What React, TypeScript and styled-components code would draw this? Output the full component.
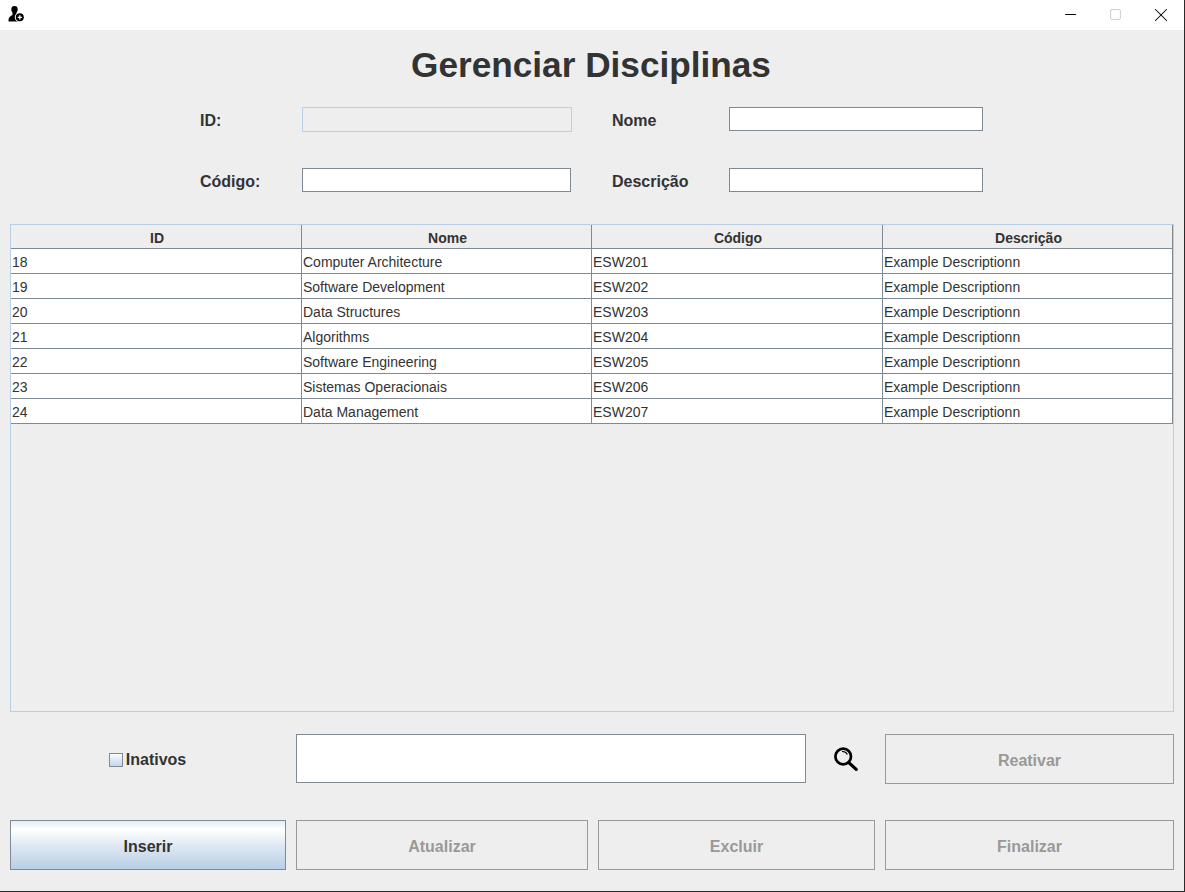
import styled, {createGlobalStyle} from "styled-components"
import {Minus, Square, X} from "lucide-react"

interface DisciplinaRow {
  id: number;
  nome: string;
  codigo: string;
  descricao: string;
}

const disciplinas: DisciplinaRow[] = [
  {id: 18, nome: "Computer Architecture", codigo: "ESW201", descricao: "Example Descriptionn"},
  {id: 19, nome: "Software Development", codigo: "ESW202", descricao: "Example Descriptionn"},
  {id: 20, nome: "Data Structures", codigo: "ESW203", descricao: "Example Descriptionn"},
  {id: 21, nome: "Algorithms", codigo: "ESW204", descricao: "Example Descriptionn"},
  {id: 22, nome: "Software Engineering", codigo: "ESW205", descricao: "Example Descriptionn"},
  {id: 23, nome: "Sistemas Operacionais", codigo: "ESW206", descricao: "Example Descriptionn"},
  {id: 24, nome: "Data Management", codigo: "ESW207", descricao: "Example Descriptionn"},
]

const AppIcon = () => (
  <svg width="17" height="17" viewBox="0 0 17 17">
    <ellipse cx="6.5" cy="3.4" rx="3.2" ry="3.4" fill="#000" />
    <path d="M4.5 5.5h4v3l3 1.2v5.8H0.5c0-3.2 .8-5 4-6.4z" fill="#000" />
    <circle cx="11.8" cy="11.3" r="5" fill="#fff" />
    <circle cx="11.8" cy="11.3" r="4" fill="#000" />
    <path d="M11.8 9.2v4.2M9.7 11.3h4.2" stroke="#fff" strokeWidth="1.3" />
  </svg>
)

const SearchIcon = () => (
  <svg width="24" height="24" viewBox="0 0 24 24" fill="none">
    <circle cx="9.2" cy="9.5" r="7.8" stroke="#000" strokeWidth="2.7" />
    <path d="M8 4.6c2.4-.2 4.4 1 5.4 3" stroke="#000" strokeWidth="1.1" />
    <path d="M14.8 15.6l7.4 6.8" stroke="#000" strokeWidth="3.2" strokeLinecap="round" />
  </svg>
)

export default function App() {
  return (
    <>
      <GlobalStyle />
      <Window>
        <TitleBar>
          <AppIcon />
          <WindowControls>
            <WindowButton><Minus size={17} strokeWidth={1.4} color="#000" /></WindowButton>
            <WindowButton><Square size={13} strokeWidth={1.6} color="#c4c4c4" /></WindowButton>
            <WindowButton><X size={22} strokeWidth={1.1} color="#000" /></WindowButton>
          </WindowControls>
        </TitleBar>
        <Content>
          <Heading>Gerenciar Disciplinas</Heading>
          <Form>
            <FieldLabel>ID:</FieldLabel>
            <LockedInput disabled />
            <FieldLabel>Nome</FieldLabel>
            <TextInput />
            <FieldLabel>Código:</FieldLabel>
            <TextInput />
            <FieldLabel>Descrição</FieldLabel>
            <TextInput />
          </Form>
          <TablePane>
            <Table>
              <colgroup>
                <col width="291" />
                <col width="290" />
                <col width="291" />
                <col width="289" />
              </colgroup>
              <thead>
                <tr>
                  <HeaderCell>ID</HeaderCell>
                  <HeaderCell>Nome</HeaderCell>
                  <HeaderCell>Código</HeaderCell>
                  <HeaderCell>Descrição</HeaderCell>
                </tr>
              </thead>
              <tbody>
                {disciplinas.map((row) => (
                  <tr key={row.id}>
                    <Cell>{row.id}</Cell>
                    <Cell>{row.nome}</Cell>
                    <Cell>{row.codigo}</Cell>
                    <Cell>{row.descricao}</Cell>
                  </tr>
                ))}
              </tbody>
            </Table>
          </TablePane>
          <SearchRow>
            <InactiveToggle>
              <CheckBox />
              Inativos
            </InactiveToggle>
            <SearchInput />
            <SearchButton><SearchIcon /></SearchButton>
            <ActionButton disabled>Reativar</ActionButton>
          </SearchRow>
          <ActionRow>
            <ActionButton $primary>Inserir</ActionButton>
            <ActionButton disabled>Atualizar</ActionButton>
            <ActionButton disabled>Excluir</ActionButton>
            <ActionButton disabled>Finalizar</ActionButton>
          </ActionRow>
        </Content>
      </Window>
    </>
  )
}

const GlobalStyle = createGlobalStyle`
    html, body {
        margin: 0;
        padding: 0;
        background: #eeeeee;
    }

    * {
        box-sizing: border-box;
    }
`

const Window = styled.div`
    width: 1185px;
    height: 892px;
    display: flex;
    flex-direction: column;
    background: #eeeeee;
    border-right: 1px solid #2a2a2a;
    border-bottom: 1px solid #2a2a2a;
    font-family: "Liberation Sans", Arial, sans-serif;
    color: #333333;
    overflow: hidden;
`

const TitleBar = styled.div`
    height: 30px;
    flex: none;
    display: flex;
    align-items: center;
    justify-content: space-between;
    padding: 0 0 1px 8px;
    background: #ffffff;
`

const WindowControls = styled.div`
    display: flex;
`

const WindowButton = styled.div`
    width: 45.5px;
    height: 29px;
    display: flex;
    align-items: center;
    justify-content: center;
`

const Content = styled.div`
    flex: 1;
    display: flex;
    flex-direction: column;
    padding: 0 10px;
`

const Heading = styled.h1`
    margin: 14px 0 0;
    height: 42px;
    font-size: 35.2px;
    line-height: 42px;
    font-weight: 700;
    text-align: center;
    color: #333333;
    padding-right: 2px;
`

const Form = styled.div`
    display: grid;
    grid-template-columns: 102px 270px 40px 117px 254px;
    grid-auto-rows: 25px;
    row-gap: 36px;
    align-items: center;
    margin: 21px 0 0 190px;
`

const FieldLabel = styled.label`
    padding-top: 2px;
    font-size: 16px;
    font-weight: 700;
    color: #333333;

    &:nth-of-type(even) {
        grid-column: 4;
    }
`

const TextInput = styled.input`
    align-self: start;
    width: 100%;
    height: 24px;
    margin: 0;
    padding: 0 3px;
    background: #ffffff;
    border: 1px solid #808a94;
    border-radius: 0;
    outline: none;

    &:nth-of-type(3) {
        width: 269px;
    }
`

const LockedInput = styled(TextInput)`
    height: 25px;
    background: #eeeeee;
    border-color: #b8cfe5;
`

const TablePane = styled.div`
    height: 488px;
    margin-top: 31px;
    width: 1164px;
    border: 1px solid #b8cfe5;
    flex: none;
`

const Table = styled.table`
    width: 1162px;
    table-layout: fixed;
    border-collapse: separate;
    border-spacing: 0;
    font-size: 14px;
    border-right: 1px solid #808a94;
    color: #333333;
`

const HeaderCell = styled.th`
    height: 24px;
    padding: 2px 0 0 2px;
    background: #eeeeee;
    border-right: 1px solid #808a94;
    border-bottom: 1px solid #808a94;
    font-size: 14px;
    font-weight: 700;
    text-align: center;

    &:last-child {
        border-right: 0;
    }
`

const Cell = styled.td`
    height: 25px;
    padding: 1px 0 0 1px;
    background: #ffffff;
    border-right: 1px solid #808a94;
    border-bottom: 1px solid #808a94;
    white-space: nowrap;

    &:last-child {
        border-right: 0;
    }
`

const SearchRow = styled.div`
    display: grid;
    grid-template-columns: 286px 510px 79px 289px;
    height: 50px;
    margin-top: 22px;
    align-items: center;
`

const InactiveToggle = styled.label`
    display: flex;
    align-items: center;
    justify-content: center;
    gap: 3px;
    padding: 2px 11px 0 0;
    font-size: 16px;
    font-weight: 700;
`

const CheckBox = styled.span`
    width: 14px;
    height: 14px;
    border: 1px solid #808a94;
    background: linear-gradient(#fbfcfe, #c4d6ea);
`

const SearchInput = styled.input`
    align-self: start;
    width: 510px;
    height: 49px;
    margin: 0;
    padding: 0 4px;
    background: #ffffff;
    border: 1px solid #808a94;
    border-radius: 0;
    outline: none;
`

const SearchButton = styled.div`
    display: flex;
    align-items: center;
    justify-content: center;
`

const ActionRow = styled.div`
    display: grid;
    grid-template-columns: 276px 292px 277px 289px;
    column-gap: 10px;
    height: 50px;
    margin-top: 36px;
`

const ActionButton = styled.button<{$primary?: boolean}>`
    height: 50px;
    margin: 0;
    padding: 4px 0 0;
    font-family: inherit;
    font-size: 16px;
    font-weight: 700;
    border-radius: 0;
    color: ${({$primary}) => ($primary ? "#333333" : "#999999")};
    border: 1px solid ${({$primary}) => ($primary ? "#808a94" : "#999999")};
    background: ${({$primary}) =>
        $primary ? "linear-gradient(#e3edf6 0%, #ffffff 18%, #dfe9f3 50%, #b8cfe5 100%)" : "#eeeeee"};
`
